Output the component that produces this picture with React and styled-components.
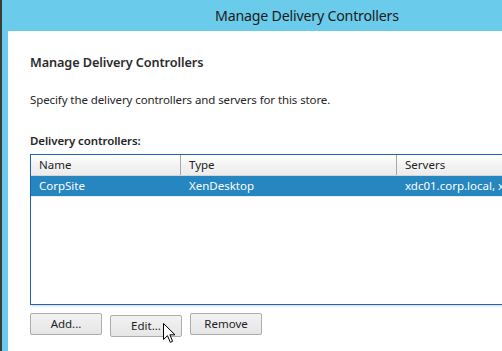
import React from "react";
import styled, { createGlobalStyle } from "styled-components";

const GlobalStyle = createGlobalStyle`
	html, body {
		margin: 0;
		padding: 0;
		background: #ffffff;
		overflow: hidden;
	}
	body {
		font-family: "Noto Sans", "Open Sans", sans-serif;
	}
`;

const controllers = [
	{ name: "CorpSite", type: "XenDesktop", servers: "xdc01.corp.local, xdc02.corp.local" },
];

function Cursor() {
	return (
		<StyledCursor width="13" height="21" viewBox="0 0 13 21">
			<path
				d="M0.5 0.5 L0.5 16.5 L4.5 12.7 L7.3 19.3 L9.6 18.3 L6.9 11.8 L12 11.8 Z"
				fill="#ffffff"
				stroke="#000000"
				strokeWidth="1"
				strokeLinejoin="miter"
			/>
		</StyledCursor>
	);
}

function App() {
	return (
		<>
			<GlobalStyle />
			<StyledWindow>
				<StyledTitleBar>Manage Delivery Controllers</StyledTitleBar>
				<StyledBody>
					<StyledHeading>Manage Delivery Controllers</StyledHeading>
					<StyledText>Specify the delivery controllers and servers for this store.</StyledText>
					<StyledLabel>Delivery controllers:</StyledLabel>
					<StyledList>
						<StyledHeaderRow>
							<StyledHeaderCell $width={150}>Name</StyledHeaderCell>
							<StyledHeaderCell $width={216}>Type</StyledHeaderCell>
							<StyledHeaderCell $width={200}>Servers</StyledHeaderCell>
						</StyledHeaderRow>
						{controllers.map((c) => (
							<StyledRow key={c.name} $selected>
								<StyledCell $width={150}>{c.name}</StyledCell>
								<StyledCell $width={216}>{c.type}</StyledCell>
								<StyledCell $width={200}>{c.servers}</StyledCell>
							</StyledRow>
						))}
					</StyledList>
					<StyledButtons>
						<StyledButton>Add...</StyledButton>
						<StyledButtonWrap>
							<StyledButton>Edit...</StyledButton>
							<Cursor />
						</StyledButtonWrap>
						<StyledButton>Remove</StyledButton>
					</StyledButtons>
				</StyledBody>
			</StyledWindow>
		</>
	);
}

const StyledWindow = styled.div`
	width: 502px;
	height: 351px;
	box-sizing: border-box;
	border-left: 2px solid #3b3b3b;
	background: #6bcbea;
	display: flex;
	flex-direction: column;
	overflow: hidden;
`;
const StyledTitleBar = styled.div`
	height: 31px;
	flex: none;
	box-sizing: border-box;
	padding-left: 213px;
	padding-top: 6px;
	font-size: 14.2px;
	color: #1b1b1b;
	letter-spacing: -0.2px;
`;
const StyledBody = styled.div`
	flex: 1;
	margin-left: 6px;
	background: #ffffff;
	padding: 22px 0 0 22px;
	display: flex;
	flex-direction: column;
	color: #1e1e1e;
`;
const StyledHeading = styled.div`
	font-size: 12.7px;
	font-weight: 600;
	line-height: 18px;
	color: #2b2b2b;
	letter-spacing: -0.1px;
`;
const StyledText = styled.div`
	font-size: 11.5px;
	line-height: 16px;
	margin-top: 21px;
	color: #262626;
	letter-spacing: -0.1px;
`;
const StyledLabel = styled.div`
	font-size: 11.5px;
	font-weight: 600;
	line-height: 16px;
	margin-top: 25px;
	color: #262626;
	letter-spacing: -0.1px;
`;
const StyledList = styled.div`
	margin-top: 5px;
	width: 580px;
	height: 151px;
	box-sizing: border-box;
	border: 1px solid #1f63ad;
	box-shadow: 1px 1px 2px rgba(100, 150, 200, 0.35);
	background: #ffffff;
	flex: none;
`;
const StyledHeaderRow = styled.div`
	display: flex;
	height: 20px;
	border-bottom: 1px solid #d5d5d5;
	background: linear-gradient(#ffffff, #f3f3f3 50%, #ececec);
`;
const StyledHeaderCell = styled.div`
	width: ${(p) => p.$width}px;
	flex: none;
	box-sizing: border-box;
	padding-left: 8px;
	font-size: 11.5px;
	line-height: 20px;
	color: #1e1e1e;
	border-right: 1px solid #a7a7a7;
`;
const StyledRow = styled.div`
	display: flex;
	height: 20px;
	background: ${(p) => (p.$selected ? "#2586c0" : "#ffffff")};
	color: ${(p) => (p.$selected ? "#ffffff" : "#1e1e1e")};
	border-bottom: 1px solid ${(p) => (p.$selected ? "#e3eef7" : "transparent")};
`;
const StyledCell = styled.div`
	width: ${(p) => p.$width}px;
	flex: none;
	box-sizing: border-box;
	padding-left: 8px;
	font-size: 11.5px;
	line-height: 20px;
	white-space: nowrap;
`;
const StyledButtons = styled.div`
	display: flex;
	gap: 8px;
	margin-top: 8px;
`;
const StyledButtonWrap = styled.div`
	position: relative;
`;
const StyledButton = styled.button`
	width: 72px;
	height: 22px;
	box-sizing: border-box;
	border: 1px solid #acacac;
	border-radius: 2px;
	background: linear-gradient(#f2f2f2, #e6e6e6);
	font-family: "Noto Sans", "Open Sans", sans-serif;
	font-size: 11.5px;
	color: #1e1e1e;
	padding: 0;
	line-height: 20px;
`;
const StyledCursor = styled.svg`
	position: absolute;
	left: 53px;
	top: 10px;
	overflow: visible;
`;

export default App;
